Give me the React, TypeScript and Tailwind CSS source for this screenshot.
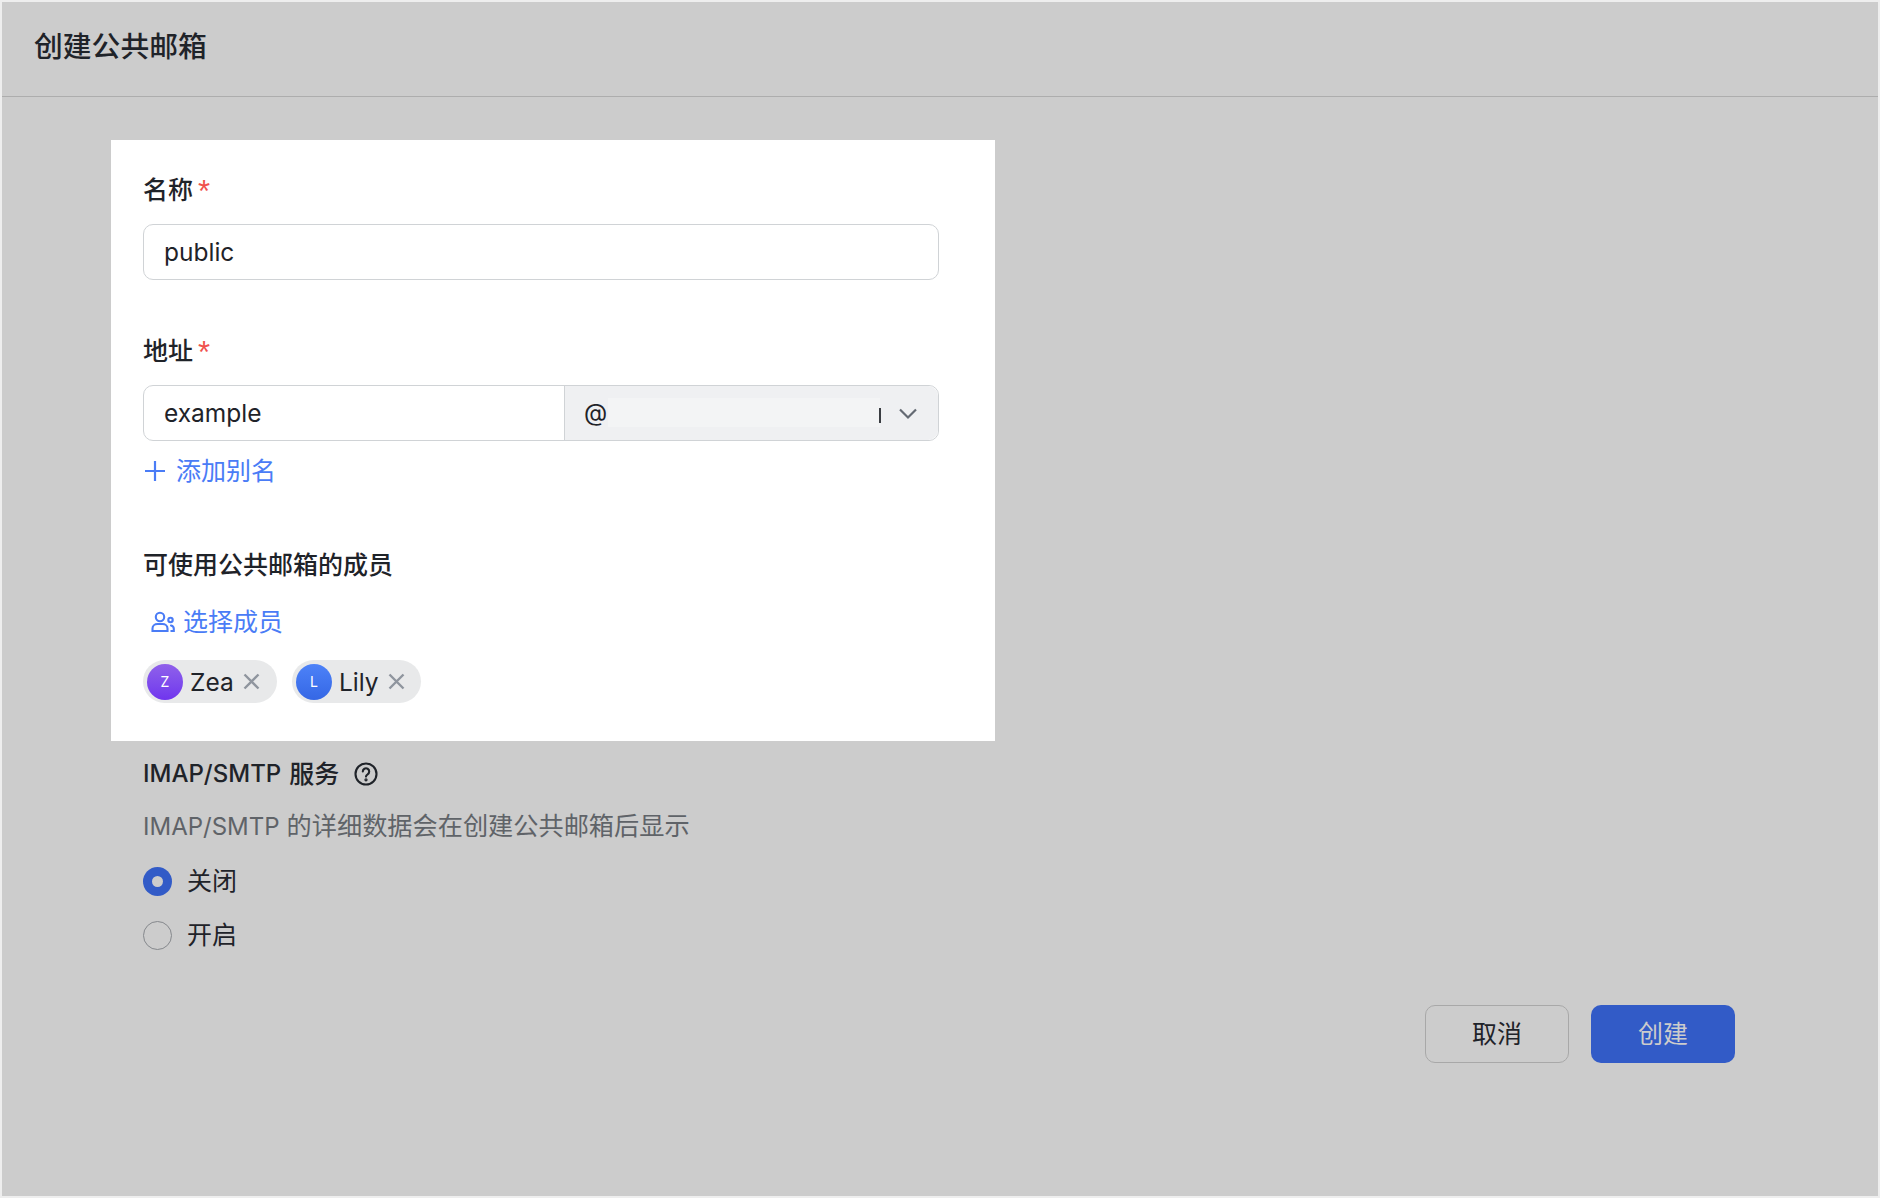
const font = "font-['Inter','Noto_Sans_CJK_SC',sans-serif]";

function Chip({ letter, name, grad, w }: { letter: string; name: string; grad: string; w: string }) {
  return (
    <div className={`flex h-[43px] items-center rounded-full bg-[#e8e9ea] pl-[4px] ${w}`}>
      <div className={`flex h-[36px] w-[36px] items-center justify-center rounded-full text-[14px] text-white ${grad}`}>{letter}</div>
      <span className="ml-[7px] pt-[1px] text-[24.5px] leading-none text-[#1f2329]">{name}</span>
      <svg className="ml-[9px]" width="17" height="17" viewBox="0 0 17 17" fill="none" stroke="#8f959e" strokeWidth="2.4">
        <path d="M1.500 1.500l14 14M15.500 1.500l-14 14" />
      </svg>
    </div>
  );
}

function Label({ children }: { children: string }) {
  return (
    <div className="flex h-[30px] items-center text-[25px] font-medium leading-none text-[#1f2329]">
      {children}
      <span className="ml-[5px] mt-[2px] font-['Liberation_Sans',sans-serif] text-[31px] font-normal text-[#f0524d]">*</span>
    </div>
  );
}

export default function App() {
  return (
    <div className={`h-[1198px] w-[1880px] bg-[#eeeeee] p-[2px] ${font}`}>
      <div className="flex h-full w-full flex-col bg-[#cccccc]">
        <header className="flex h-[95px] flex-none items-center border-b border-[#adadad] pb-[4px] pl-[32px]">
          <h1 className="text-[28.800px] font-medium leading-none text-[#1f2329]">创建公共邮箱</h1>
        </header>

        <div className="flex flex-1 flex-col pt-[43px]">
          <section className="ml-[109px] h-[601px] w-[884px] bg-white pl-[32px] pt-[35px]">
            <Label>名称</Label>
            <div className="mt-[19px] flex h-[56px] w-[796px] items-center rounded-[10px] border border-[#d0d3d6] pl-[20px] text-[24.5px] text-[#1f2329]">
              public
            </div>

            <div className="mt-[56px]">
              <Label>地址</Label>
            </div>
            <div className="mt-[19px] flex h-[56px] w-[796px] rounded-[10px] border border-[#d0d3d6] text-[24.5px] text-[#1f2329]">
              <div className="flex w-[420px] items-center pl-[20px] pt-[1px]">example</div>
              <div className="relative flex flex-1 items-center rounded-r-[10px] border-l border-[#d0d3d6] bg-[#eff0f2] pl-[19px]">
                <span className="text-[24px]">@</span>
                <div className="absolute left-[43px] top-[12px] h-[29px] w-[272px] bg-[#f3f4f5]" />
                <div className="absolute left-[314px] top-[22px] h-[15px] w-[2px] bg-[#3a3d42]" />
                <svg className="absolute left-[334px] top-[22px]" width="18" height="12" viewBox="0 0 18 12" fill="none" stroke="#646a73" strokeWidth="2.2">
                  <path d="M1 1.500l8 8 8-8" />
                </svg>
              </div>
            </div>

            <div className="mt-[15px] flex h-[30px] items-center text-[25px] leading-none text-[#4a7cf6]">
              <svg className="ml-[1px]" width="22" height="22" viewBox="0 0 22 22" fill="none" stroke="#4a7cf6" strokeWidth="2.200">
                <path d="M11 1v20M1 11h20" />
              </svg>
              <span className="ml-[10px]">添加别名</span>
            </div>

            <div className="mt-[64px] flex h-[30px] items-center text-[25px] font-medium leading-none text-[#1f2329]">
              可使用公共邮箱的成员
            </div>

            <div className="mt-[27px] flex h-[30px] items-center text-[25px] leading-none text-[#4a7cf6]">
              <svg className="ml-[8px]" width="24" height="22" viewBox="0 0 24 22" fill="none" stroke="#4a7cf6" strokeWidth="2.100" strokeLinecap="round">
                <circle cx="9" cy="6" r="4.200" />
                <path d="M1.500 20v-2.500c0-2.800 2.400-4.500 5-4.500h5c2.600 0 5 1.700 5 4.500V20H1.500z" />
                <circle cx="19.500" cy="9" r="2.200" />
                <path d="M20 14.500c1.600.4 2.800 1.500 2.800 3.200V20h-2.500" />
              </svg>
              <span className="ml-[8px]">选择成员</span>
            </div>

            <div className="mt-[23px] flex gap-[15px]">
              <Chip letter="Z" name="Zea" grad="bg-gradient-to-b from-[#9060ea] to-[#7034ee]" w="w-[134px]" />
              <Chip letter="L" name="Lily" grad="bg-gradient-to-b from-[#4d82f8] to-[#3567e5]" w="w-[129px]" />
            </div>
          </section>

          <section className="ml-[141px] pt-[18px]">
            <div className="flex h-[30px] items-center text-[25px] font-medium leading-none text-[#1f2329]">
              <span className="text-[24px]">IMAP/SMTP</span>
              <span className="ml-[8px]">服务</span>
              <svg className="ml-[15px]" width="24" height="24" viewBox="0 0 24 24" fill="none" stroke="#1f2329" strokeWidth="2.100" strokeLinecap="round">
                <circle cx="12" cy="12" r="10.500" />
                <path d="M8.800 9.500a3.200 3.200 0 1 1 4.800 2.800c-1 .6-1.600 1.200-1.600 2.300" />
                <circle cx="12" cy="17.800" r=".6" fill="#1f2329" />
              </svg>
            </div>
            <p className="mt-[23px] flex h-[30px] items-center text-[25.200px] leading-none text-[#5f6368]">
              <span className="text-[24px]">IMAP/SMTP</span>
              <span className="ml-[7px]">的详细数据会在创建公共邮箱后显示</span>
            </p>
            <div className="mt-[17px] flex h-[44px] items-center text-[25px] leading-none text-[#1f2329]">
              <span className="flex h-[29px] w-[29px] items-center justify-center rounded-full bg-[#325bc7]">
                <span className="h-[11px] w-[11px] rounded-full bg-[#cccccc]" />
              </span>
              <span className="ml-[15px]">关闭</span>
            </div>
            <div className="mt-[10px] flex h-[44px] items-center text-[25px] leading-none text-[#1f2329]">
              <span className="h-[29px] w-[29px] rounded-full border border-[#85888c]" />
              <span className="ml-[15px]">开启</span>
            </div>
          </section>

          <footer className="mt-[48px] flex justify-end gap-[22px] pr-[143px]">
            <button className="flex h-[58px] w-[144px] items-center justify-center rounded-[10px] border border-[#a8a8a8] pt-[1px] text-[25px] text-[#1f2329]">取消</button>
            <button className="flex h-[58px] w-[144px] items-center justify-center rounded-[10px] bg-[#325bc7] pt-[1px] text-[25px] text-[#cccccc]">创建</button>
          </footer>
        </div>
      </div>
    </div>
  );
}
